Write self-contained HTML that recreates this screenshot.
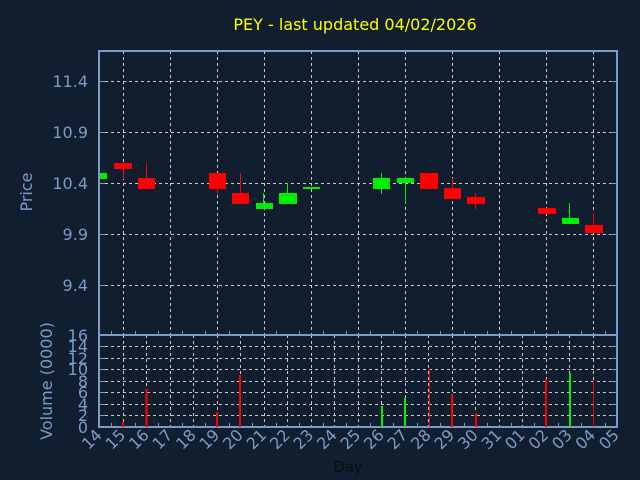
<!DOCTYPE html>
<html><head><meta charset="utf-8"><style>
html,body{margin:0;padding:0;background:#111e2f;}
svg{display:block;font-family:"DejaVu Sans","Liberation Sans",sans-serif;}
</style></head><body>
<svg width="640" height="480" viewBox="0 0 640 480" xmlns="http://www.w3.org/2000/svg">
<rect width="640" height="480" fill="#111e2f"/>
<text x="355" y="30" fill="#ffff00" font-size="16" text-anchor="middle">PEY - last updated 04/02/2026</text>
<g stroke="#c8c8c8" stroke-width="1" stroke-dasharray="3,3" fill="none">
<path d="M123.5 51V335M170.5 51V335M217.5 51V335M264.5 51V335M311.5 51V335M358.5 51V335M405.5 51V335M452.5 51V335M499.5 51V335M546.5 51V335M593.5 51V335"/>
<path d="M99 81.5H617M99 132.5H617M99 183.5H617M99 234.5H617M99 285.5H617"/>
<path d="M99 346.5H617M99 358.5H617M99 369.5H617M99 381.5H617M99 392.5H617M99 404.5H617M99 415.5H617"/>
<path d="M123.5 335V427M146.5 335V427M170.5 335V427M193.5 335V427M217.5 335V427M240.5 335V427M264.5 335V427M287.5 335V427M311.5 335V427M334.5 335V427M358.5 335V427M381.5 335V427M405.5 335V427M428.5 335V427M452.5 335V427M475.5 335V427M499.5 335V427M522.5 335V427M546.5 335V427M569.5 335V427M593.5 335V427"/>
</g>
<g stroke="#7a9cc8" stroke-width="2" fill="none">
<rect x="99" y="51" width="518" height="376"/>
<path d="M99 335H617"/>
</g>
<g stroke="#7a9cc8" stroke-width="1">
<path d="M99 81.5h6M99 132.5h6M99 183.5h6M99 234.5h6M99 285.5h6M611 81.5h6M611 132.5h6M611 183.5h6M611 234.5h6M611 285.5h6"/>
<path d="M99 346.5h6M99 358.5h6M99 369.5h6M99 381.5h6M99 392.5h6M99 404.5h6M99 415.5h6M611 346.5h6M611 358.5h6M611 369.5h6M611 381.5h6M611 392.5h6M611 404.5h6M611 415.5h6"/>
<path d="M111.5 335v-4M135.5 335v-4M158.5 335v-4M182.5 335v-4M205.5 335v-4M229.5 335v-4M252.5 335v-4M276.5 335v-4M299.5 335v-4M323.5 335v-4M346.5 335v-4M370.5 335v-4M393.5 335v-4M417.5 335v-4M440.5 335v-4M464.5 335v-4M487.5 335v-4M511.5 335v-4M534.5 335v-4M558.5 335v-4M581.5 335v-4M605.5 335v-4"/>
<path d="M111.5 427v-4M135.5 427v-4M158.5 427v-4M182.5 427v-4M205.5 427v-4M229.5 427v-4M252.5 427v-4M276.5 427v-4M299.5 427v-4M323.5 427v-4M346.5 427v-4M370.5 427v-4M393.5 427v-4M417.5 427v-4M440.5 427v-4M464.5 427v-4M487.5 427v-4M511.5 427v-4M534.5 427v-4M558.5 427v-4M581.5 427v-4M605.5 427v-4"/>
</g>
<g fill="#00ee00">
<rect x="100" y="173" width="7" height="6"/>
<rect x="256" y="203" width="17" height="6"/><rect x="263" y="193" width="1" height="10"/>
<rect x="279" y="193" width="18" height="11"/><rect x="287" y="183" width="1" height="10"/>
<rect x="303" y="187" width="17" height="2"/>
<rect x="373" y="178" width="17" height="11"/><rect x="381" y="173" width="1" height="21"/>
<rect x="397" y="178" width="17" height="5"/><rect x="405" y="183" width="1" height="21"/>
<rect x="562" y="218" width="17" height="6"/><rect x="569" y="203" width="1" height="15"/>
</g>
<g fill="#ff0000">
<rect x="114" y="163" width="18" height="6"/><rect x="123" y="169" width="1" height="10"/>
<rect x="138" y="178" width="17" height="11"/><rect x="146" y="163" width="1" height="15"/>
<rect x="209" y="173" width="17" height="16"/><rect x="217" y="189" width="1" height="5"/>
<rect x="232" y="193" width="17" height="11"/><rect x="240" y="173" width="1" height="20"/>
<rect x="420" y="173" width="18" height="16"/>
<rect x="444" y="188" width="17" height="11"/><rect x="452" y="178" width="1" height="10"/>
<rect x="467" y="197" width="18" height="7"/><rect x="475" y="193" width="1" height="16"/>
<rect x="538" y="208" width="18" height="6"/>
<rect x="585" y="225" width="18" height="8"/><rect x="593" y="213" width="1" height="12"/>
</g>
<g stroke-width="2">
<path stroke="#ff0000" d="M123 422V427M146.5 389V427M217 412V427M240 375V427M452 394V427M476 413V427M546 379V427"/>
<path stroke="#00ee00" d="M382 406V427M405 398V427M570 373V427"/>
<path stroke="#ff0000" stroke-width="1" d="M429.5 369V427M593.5 380V427"/>
</g>
<g fill="#7a9cc8" font-size="16" text-anchor="end">
<text x="88" y="87">11.4</text><text x="88" y="138">10.9</text><text x="88" y="189">10.4</text><text x="88" y="240">9.9</text><text x="88" y="291">9.4</text>
<text x="88" y="341">16</text><text x="88" y="352">14</text><text x="88" y="364">12</text><text x="88" y="375">10</text><text x="88" y="387">8</text><text x="88" y="398">6</text><text x="88" y="410">4</text><text x="88" y="421">2</text><text x="88" y="433">0</text>
</g>
<text transform="translate(32,192) rotate(-90)" fill="#7a9cc8" font-size="16" text-anchor="middle">Price</text>
<text transform="translate(52,381) rotate(-90)" fill="#7a9cc8" font-size="16" text-anchor="middle">Volume (0000)</text>
<text x="348" y="472" font-size="15" text-anchor="middle" fill="#0a0a0a">Day</text>
<g fill="#7a9cc8" font-size="16" text-anchor="end">
<text transform="translate(103,436) rotate(-45)">14</text>
<text transform="translate(126.5,436) rotate(-45)">15</text>
<text transform="translate(150,436) rotate(-45)">16</text>
<text transform="translate(173.5,436) rotate(-45)">17</text>
<text transform="translate(197,436) rotate(-45)">18</text>
<text transform="translate(220.5,436) rotate(-45)">19</text>
<text transform="translate(244,436) rotate(-45)">20</text>
<text transform="translate(267.5,436) rotate(-45)">21</text>
<text transform="translate(291,436) rotate(-45)">22</text>
<text transform="translate(314.5,436) rotate(-45)">23</text>
<text transform="translate(338,436) rotate(-45)">24</text>
<text transform="translate(361.5,436) rotate(-45)">25</text>
<text transform="translate(385,436) rotate(-45)">26</text>
<text transform="translate(408.5,436) rotate(-45)">27</text>
<text transform="translate(432,436) rotate(-45)">28</text>
<text transform="translate(455.5,436) rotate(-45)">29</text>
<text transform="translate(479,436) rotate(-45)">30</text>
<text transform="translate(502.5,436) rotate(-45)">31</text>
<text transform="translate(526,436) rotate(-45)">01</text>
<text transform="translate(549.5,436) rotate(-45)">02</text>
<text transform="translate(573,436) rotate(-45)">03</text>
<text transform="translate(596.5,436) rotate(-45)">04</text>
<text transform="translate(620,436) rotate(-45)">05</text>
</g>
</svg>
</body></html>
